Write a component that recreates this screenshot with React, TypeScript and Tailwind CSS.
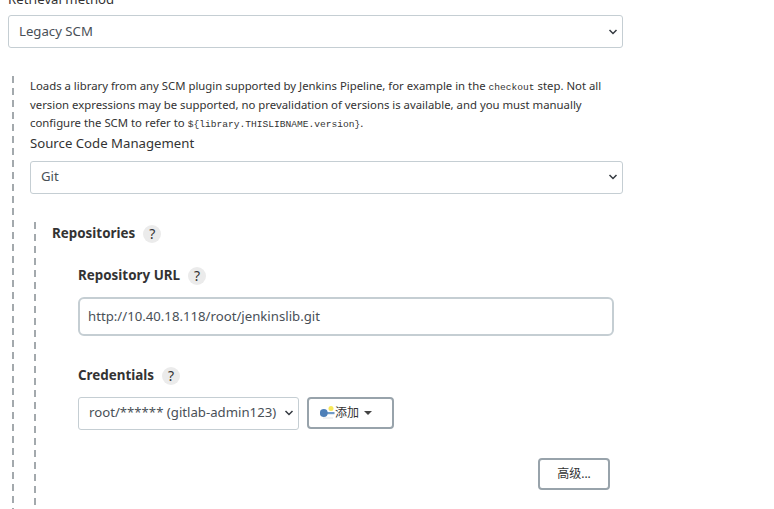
const FONT = "font-['Noto_Sans','Noto_Sans_CJK_SC',sans-serif]";
const MONO = "font-['Liberation_Mono',monospace] text-[9.6px] leading-none";

function DashedGroup({ className, children }: { className: string; children: React.ReactNode }) {
  return (
    <div className={`flex ${className}`}>
      <div className="w-[2px] shrink-0 bg-[repeating-linear-gradient(to_bottom,#a3a9ad_0,#a3a9ad_7px,transparent_7px,transparent_12px)]" />
      <div className="flex-1 min-w-0">{children}</div>
    </div>
  );
}

function Chevron() {
  return (
    <svg className="absolute right-[5px] top-1/2 -translate-y-1/2 pointer-events-none" width="10" height="8" viewBox="0 0 10 8" fill="none">
      <path d="M1.5 2 L5 5.5 L8.5 2" stroke="#343a40" strokeWidth="1.5" />
    </svg>
  );
}

function Select({ value, className }: { value: string; className: string }) {
  return (
    <div className={`relative ${className}`}>
      <select
        defaultValue={value}
        className="w-full h-full appearance-none bg-white border border-[#c5ced3] rounded-[3px] pl-[10px] pr-4 text-[13.2px] text-[#495057] outline-none"
      >
        <option>{value}</option>
      </select>
      <Chevron />
    </div>
  );
}

function HelpIcon() {
  return (
    <span className="ml-[8px] w-[18px] h-[18px] rounded-full bg-[#ebebeb] flex items-center justify-center text-[14px] text-[#333]">
      ?
    </span>
  );
}

function FieldLabel({ text, className }: { text: string; className: string }) {
  return (
    <div className={`flex items-center h-[18px] ${className}`}>
      <span className="text-[13.4px] font-bold text-[#333]">{text}</span>
      <HelpIcon />
    </div>
  );
}

function KeyIcon() {
  return (
    <svg width="15" height="15" viewBox="0 0 15 15" className="shrink-0">
      <circle cx="11" cy="3.5" r="2.5" fill="#f7e85a" />
      <rect x="6" y="7" width="8.5" height="2.2" fill="#6f9bc9" />
      <circle cx="3.8" cy="8" r="3.9" fill="#4d7fb8" />
      <rect x="3" y="12.5" width="10" height="1" fill="#dfe3e7" />
    </svg>
  );
}

export default function App() {
  return (
    <div className={`${FONT} w-[774px] h-[509px] overflow-hidden bg-white text-[#333]`}>
      <div className="-mt-[11px] pl-[8px] h-[26px] text-[13.2px] leading-[20px]">Retrieval method</div>
      <Select value="Legacy SCM" className="ml-[8px] w-[615px] h-[33px]" />

      <DashedGroup className="ml-[12px] mt-[28px] h-[480px]">
        <div className="pl-[16px]">
          <div className="w-[580px] text-[11.35px] leading-[18.5px] pt-px">
            Loads a library from any SCM plugin supported by Jenkins Pipeline, for example in the{' '}
            <code className={MONO}>checkout</code> step. Not all version expressions may be supported, no prevalidation of
            versions is available, and you must manually configure the SCM to refer to{' '}
            <code className={MONO}>{'${library.THISLIBNAME.version}'}</code>.
          </div>
          <div className="text-[13.2px] leading-[20px]">Source Code Management</div>
          <Select value="Git" className="mt-[8px] w-[593px] h-[33px]" />

          <DashedGroup className="ml-[4px] mt-[28px] h-[300px]">
            <div className="pl-[16px] pt-[3px]">
              <FieldLabel text="Repositories" className="" />
              <div className="pl-[26px] pt-[24px]">
                <FieldLabel text="Repository URL" className="" />
                <input
                  defaultValue="http://10.40.18.118/root/jenkinslib.git"
                  className="block mt-[12px] w-[536px] h-[39px] border-2 border-[#c5ced3] rounded-[6px] px-[8px] text-[13.2px] text-[#495057] outline-none"
                />
                <FieldLabel text="Credentials" className="mt-[31px]" />
                <div className="flex mt-[12px] gap-[8px]">
                  <Select value="root/****** (gitlab-admin123)" className="w-[221px] h-[33px]" />
                  <button className="w-[87px] h-[32px] border-2 border-[#98a3ab] rounded-[4px] flex items-center pl-[11px] text-[12px] text-[#333]">
                    <KeyIcon />
                    <span>添加</span>
                    <span className="ml-[5px] border-x-[4px] border-x-transparent border-t-[4px] border-t-[#444]" />
                  </button>
                </div>
                <div className="flex justify-end w-[532px] mt-[28px]">
                  <button className="w-[72px] h-[32px] border-2 border-[#98a3ab] rounded-[4px] text-[12px] text-[#333]">高级...</button>
                </div>
              </div>
            </div>
          </DashedGroup>
        </div>
      </DashedGroup>
    </div>
  );
}
